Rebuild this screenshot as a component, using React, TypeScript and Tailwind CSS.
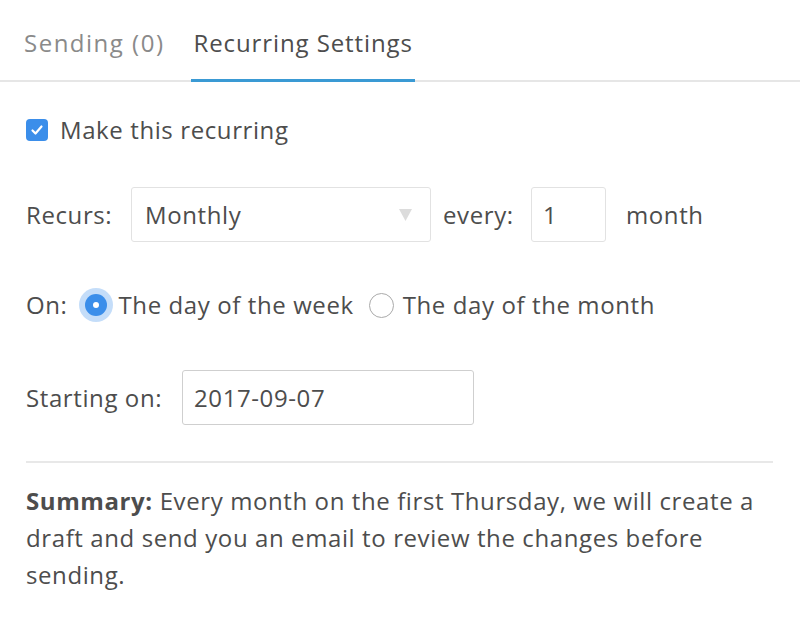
import React from "react";

export default function App() {
  return (
    <div
      className="w-[800px] h-[622px] bg-white text-[#4d4d4d] overflow-hidden"
      style={{ fontFamily: "'Open Sans', Lato, sans-serif" }}
    >
      {/* Tabs */}
      <div className="flex items-end h-[82px] border-b-2 border-[#e6e6e6] pl-[24px] gap-[29px]">
        <div className="pb-[19px] text-[24px] tracking-[1.5px] text-[#8a8a8a]">Sending (0)</div>
        <div className="relative pb-[19px] text-[24px] tracking-[0.9px] text-[#4d4d4d] px-[2px] -mx-[2px]">
          Recurring Settings
          <div className="absolute left-0 right-0 -bottom-[2px] h-[3px] bg-[#3a9ad4]" />
        </div>
      </div>

      <div className="px-[26px] text-[24px] tracking-[0.6px]">
        {/* checkbox */}
        <div className="flex items-center gap-[12px] mt-[36px] h-[24px]">
          <div className="w-[22px] h-[22px] rounded-[4px] bg-[#3b8eea] flex items-center justify-center">
            <svg width="14" height="14" viewBox="0 0 14 14">
              <path d="M2.5 7.5 L5.5 10.5 L11.5 3.5" stroke="white" strokeWidth="2.2" fill="none" strokeLinecap="round" strokeLinejoin="round" />
            </svg>
          </div>
          <span>Make this recurring</span>
        </div>

        {/* Recurs */}
        <div className="flex items-center mt-[45px] h-[55px]">
          <span className="w-[105px]">Recurs:</span>
          <div className="relative w-[300px] h-[55px] border border-[#e2e2e2] rounded-[3px] flex items-center pl-[13px]">
            Monthly
            <svg className="absolute right-[18px] top-[21px]" width="13" height="12" viewBox="0 0 13 12">
              <path d="M0 0 H13 L6.5 12 Z" fill="#dcdcdc" />
            </svg>
          </div>
          <span className="ml-[12px] w-[88px]">every:</span>
          <div className="w-[75px] h-[55px] border border-[#e2e2e2] rounded-[3px] flex items-center pl-[11px]">
            1
          </div>
          <span className="ml-[20px]">month</span>
        </div>

        {/* On */}
        <div className="flex items-center mt-[48px] h-[30px]">
          <span>On:</span>
          <div className="ml-[17px] w-[22px] h-[22px] rounded-full bg-[#3b8eea] flex items-center justify-center shadow-[0_0_0_6px_rgba(59,142,234,0.3)]">
            <div className="w-[6px] h-[6px] rounded-full bg-white" />
          </div>
          <span className="ml-[12px]">The day of the week</span>
          <div className="ml-[15px] w-[25px] h-[25px] rounded-full border-[1.5px] border-[#aaaaaa] bg-white" />
          <span className="ml-[9px]">The day of the month</span>
        </div>

        {/* Starting on */}
        <div className="flex items-center mt-[50px] h-[55px]">
          <span className="w-[156px]">Starting on:</span>
          <div className="w-[292px] h-[55px] border border-[#cfcfcf] rounded-[3px] flex items-center pl-[11px]">
            2017-09-07
          </div>
        </div>

        <div className="mt-[36px] border-t-2 border-[#e8e8e8] mr-[1px]" />

        <p className="mt-[19px] text-[24px] tracking-[0.6px] leading-[37px]">
          <span className="font-bold">Summary:</span> Every month on the first Thursday, we will create a draft and send you an email to review the changes before sending.
        </p>
      </div>
    </div>
  );
}
